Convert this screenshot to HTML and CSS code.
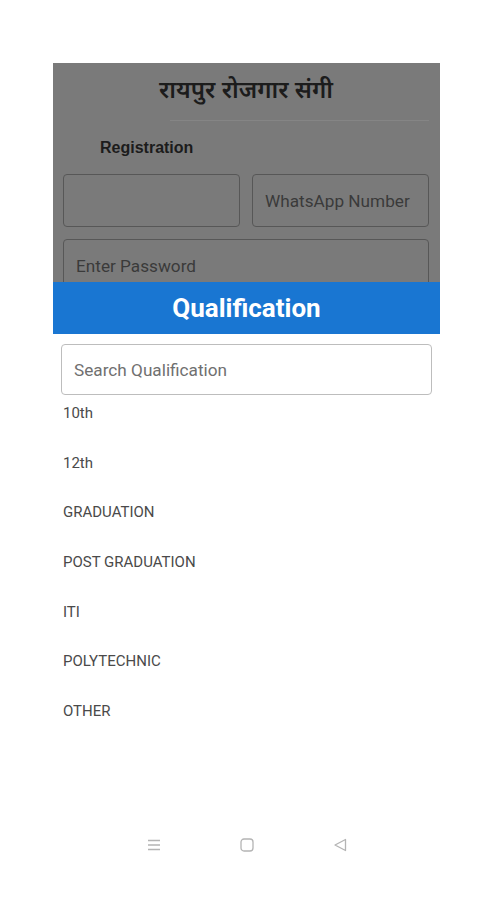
FILE: index.html
```html
<!DOCTYPE html>
<html lang="en">
<head>
  <meta charset="UTF-8">
  <meta name="viewport" content="width=device-width, initial-scale=1.0">
  <title>Raipur Rojgar Sangi</title>
  <link rel="stylesheet" href="styles.css">
</head>
<body>
  <div class="screen">
    <div class="backdrop">
      <h1 class="app-title">रायपुर रोजगार संगी</h1>
      <div class="title-line"></div>
      <h2 class="section-title">Registration</h2>
      <div class="field-row">
        <div class="field"></div>
        <div class="field">WhatsApp Number</div>
      </div>
      <div class="field field-wide">Enter Password</div>
    </div>

    <div class="dialog">
      <div class="dialog-head">Qualification</div>
      <div class="search">Search Qualification</div>
      <ul class="options">
        <li>10th</li>
        <li>12th</li>
        <li>GRADUATION</li>
        <li>POST GRADUATION</li>
        <li>ITI</li>
        <li>POLYTECHNIC</li>
        <li>OTHER</li>
      </ul>
    </div>
  </div>

  <div class="navbar">
    <svg width="14" height="12" viewBox="0 0 14 12"><path d="M1 1.5h12M1 6h12M1 10.5h12" stroke="#b4b4b4" stroke-width="1.3" fill="none"/></svg>
    <svg width="14" height="14" viewBox="0 0 14 14"><rect x="1" y="1" width="12" height="12" rx="3" stroke="#b4b4b4" stroke-width="1.3" fill="none"/></svg>
    <svg width="14" height="14" viewBox="0 0 14 14"><path d="M12.5 1.5v11L2 7z" stroke="#b4b4b4" stroke-width="1.3" fill="none" stroke-linejoin="round"/></svg>
  </div>
</body>
</html>
```

FILE: styles.css
```css
:root {
  --dim-bg: #7a7a7a;
  --blue: #1976d2;
  --text: #4a4a4a;
}
body {
  margin: 0;
  background: #fff;
  font-family: Roboto, "Noto Sans", sans-serif;
  width: 485px;
  height: 900px;
  overflow: hidden;
}
.screen {
  margin: 63px 0 0 53px;
  width: 387px;
}
.backdrop {
  background: var(--dim-bg);
  height: 219px;
  overflow: hidden;
  padding: 0 11px 0 10px;
  box-sizing: border-box;
}
.app-title {
  margin: 0;
  padding-top: 14px;
  text-align: center;
  font-family: "Noto Sans Devanagari", "Noto Sans", "Lohit Devanagari", sans-serif;
  font-size: 24px;
  line-height: 30px;
  font-weight: 600;
  color: #1c1c1c;
}
.title-line {
  margin: 13px 0 0 107px;
  height: 1px;
  background: #858585;
}
.section-title {
  margin: 16px 0 0 37px;
  font-family: "Liberation Sans", Arial, sans-serif;
  font-size: 16px;
  line-height: 22px;
  font-weight: bold;
  color: #1c1c1c;
}
.field-row {
  display: flex;
  gap: 12px;
  margin-top: 15px;
}
.field {
  flex: 1;
  height: 53px;
  box-sizing: border-box;
  border: 1px solid #575757;
  border-radius: 4px;
  padding: 0 12px;
  display: flex;
  align-items: center;
  font-size: 17.2px;
  color: #3a3a3a;
}
.field-wide {
  margin-top: 12px;
  height: 60px;
  align-items: flex-start;
  padding-top: 16px;
}
.dialog-head {
  background: var(--blue);
  height: 52px;
  color: #fff;
  font-size: 26px;
  font-weight: bold;
  text-align: center;
  line-height: 52px;
}
.search {
  margin: 10px 8px 0 8px;
  height: 51px;
  box-sizing: border-box;
  border: 1px solid #bdbdbd;
  border-radius: 4px;
  padding: 0 12px;
  display: flex;
  align-items: center;
  font-size: 17.2px;
  color: #707070;
}
.options {
  list-style: none;
  margin: 0;
  padding: 0 0 0 10px;
}
.options li {
  height: 49.7px;
  box-sizing: border-box;
  padding-top: 6px;
  font-size: 15px;
  line-height: 24px;
  color: var(--text);
}
.navbar {
  position: absolute;
  left: 0;
  top: 838px;
  width: 485px;
  box-sizing: border-box;
  padding-left: 8px;
  display: flex;
  justify-content: center;
  align-items: center;
  gap: 79px;
}
```
